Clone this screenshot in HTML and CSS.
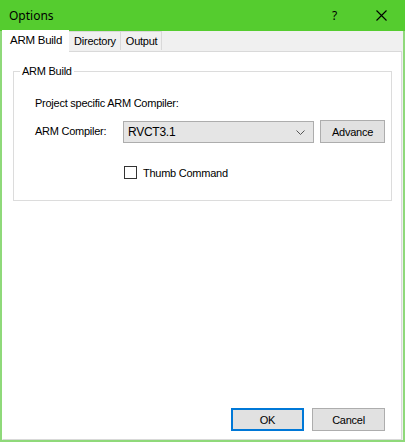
FILE: index.html
```html
<!DOCTYPE html>
<html>
<head>
<meta charset="utf-8">
<link rel="stylesheet" href="styles.css">
</head>
<body>
<div class="window">
  <div class="titlebar">
    <span class="title">Options</span>
    <span class="help">?</span>
    <span class="close">
      <svg width="11" height="11" viewBox="0 0 11 11"><path d="M0.5 0.5 L10.5 10.5 M10.5 0.5 L0.5 10.5" stroke="#000" stroke-width="1.1" fill="none"/></svg>
    </span>
  </div>
  <div class="client">
    <div class="tabs">
      <div class="tab active">ARM Build</div>
      <div class="tab">Directory</div>
      <div class="tab">Output</div>
    </div>
    <div class="panel">
      <fieldset class="group">
        <legend>ARM Build</legend>
        <div class="row1">Project specific ARM Compiler:</div>
        <div class="row2">
          <span class="lbl">ARM Compiler:</span>
          <div class="combo">
            <span>RVCT3.1</span>
            <svg width="9" height="5" viewBox="0 0 9 5"><path d="M0.5 0.5 L4.5 4.5 L8.5 0.5" stroke="#555" stroke-width="1" fill="none"/></svg>
          </div>
          <div class="btn adv">Advance</div>
        </div>
        <div class="row3">
          <span class="check"></span>
          <span>Thumb Command</span>
        </div>
      </fieldset>
      <div class="spacer"></div>
      <div class="footer">
        <div class="btn ok">OK</div>
        <div class="btn cancel">Cancel</div>
      </div>
    </div>
  </div>
</div>
</body>
</html>
```

FILE: styles.css
```css
* { box-sizing: border-box; }
html, body { margin: 0; padding: 0; }
body {
  width: 405px;
  height: 442px;
  overflow: hidden;
  font-family: "Liberation Sans", Arial, sans-serif;
  font-size: 11px;
  letter-spacing: -0.25px;
  color: #000;
  background: #fff;
}
.window {
  width: 405px;
  height: 442px;
  display: flex;
  flex-direction: column;
}
.titlebar {
  height: 31px;
  background: #55cc2f;
  display: flex;
  align-items: center;
  flex: none;
  letter-spacing: 0;
}
.title {
  font-family: "Noto Sans", "Open Sans", sans-serif;
  font-size: 12px;
  margin-left: 9px;
  margin-top: -1px;
  flex: 1;
}
.help {
  font-family: "Noto Sans", "Open Sans", sans-serif;
  font-size: 12px;
  width: 8px;
  margin-right: 36px;
}
.close {
  width: 11px;
  height: 11px;
  margin-right: 18px;
  margin-top: -1px;
  display: flex;
}
.client {
  flex: 1;
  background: #f0f0f0;
  border-left: 2px solid #8fd97a;
  border-right: 2px solid #8fd97a;
  border-bottom: 2px solid #8fd97a;
  display: flex;
  flex-direction: column;
  padding-right: 1px;
}
.tabs {
  height: 20px;
  display: flex;
  align-items: flex-end;
  flex: none;
  position: relative;
  z-index: 1;
}
.tab {
  height: 19px;
  border: 1px solid #d9d9d9;
  border-bottom: none;
  padding: 0 4px 0 5px;
  display: flex;
  align-items: center;
  background: #f0f0f0;
  margin-bottom: 1px;
  white-space: nowrap;
}
.tab + .tab { border-left: none; }
.tab.active {
  height: 22px;
  background: #fff;
  border-color: #fff;
  margin-bottom: -1px;
  padding: 0 6px 3px 7px;
  font-size: 11.5px;
}
.panel {
  flex: 1;
  background: #fff;
  border: 1px solid #d9d9d9;
  border-left-color: #fff;
  display: flex;
  flex-direction: column;
  padding: 13px 9px 8px 10px;
}
.group {
  margin: 0;
  border: 1px solid #dcdcdc;
  padding: 0 0 21px 0;
  min-width: 0;
}
.group legend {
  padding: 0 2px;
  margin-left: 6px;
  line-height: 13px;
  font-size: 11px;
}
.row1 {
  margin-top: 18px;
  line-height: 14px;
  padding-left: 21px;
}
.row2 {
  margin-top: 10px;
  display: flex;
  align-items: flex-start;
  height: 23px;
  padding-left: 21px;
}
.lbl {
  width: 88px;
  line-height: 23px;
  flex: none;
}
.combo {
  width: 191px;
  height: 22px;
  margin-top: 1px;
  background: #e5e5e5;
  border: 1px solid #adadad;
  display: flex;
  align-items: center;
  justify-content: space-between;
  padding: 0 8px 0 4px;
  font-size: 12px;
}
.btn {
  height: 23px;
  background: #e1e1e1;
  border: 1px solid #adadad;
  display: flex;
  align-items: center;
  justify-content: center;
}
.adv {
  width: 65px;
  margin-left: 6px;
}
.row3 {
  margin-top: 23px;
  display: flex;
  align-items: center;
  padding-left: 110px;
  height: 13px;
}
.check {
  width: 13px;
  height: 13px;
  border: 1px solid #333;
  background: #fff;
  margin-right: 6px;
}
.spacer { flex: 1; }
.footer {
  display: flex;
  justify-content: flex-end;
  gap: 8px;
  padding-right: 7px;
}
.ok {
  width: 73px;
  border: 2px solid #0078d7;
}
.cancel {
  width: 73px;
}
```
